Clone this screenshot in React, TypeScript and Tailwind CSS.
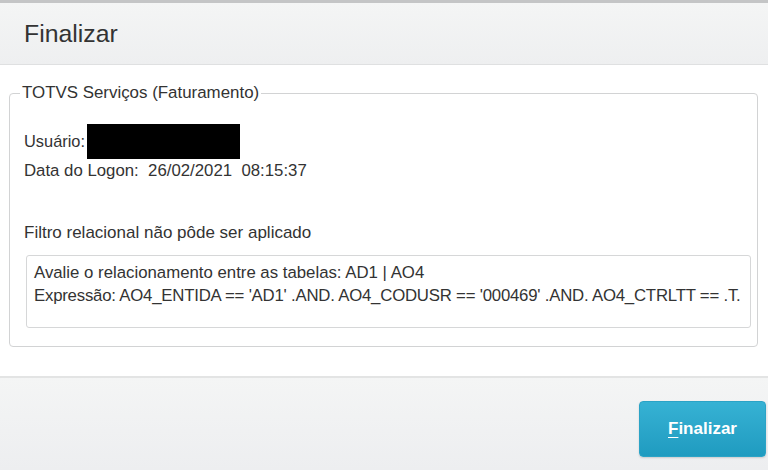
import React from "react";

export default function App() {
  return (
    <div className="w-[768px] h-[470px] bg-white flex flex-col font-['Liberation_Sans',Arial,sans-serif] text-[#333] overflow-hidden">
      <div className="h-[65px] shrink-0 border-t-[3px] border-b border-t-[#c4c5c6] border-b-[#dfe0e1] bg-gradient-to-b from-[#f4f5f5] to-[#eeeff0] flex items-center pl-[24px]">
        <span className="text-[24.8px] leading-[28px] text-[#333]">Finalizar</span>
      </div>
      <div className="flex-1 bg-white">
        <fieldset className="mt-[19px] ml-[9px] mr-[10px] border border-[#d2d3d4] rounded-[4px] pl-[14px] pr-[6px] pb-[18px]">
          <legend className="ml-[-4px] px-[2px] text-[16.9px] leading-[18px] text-[#333]">TOTVS Serviços (Faturamento)</legend>
          <div className="mt-[22px] h-[35px] flex items-center text-[16.4px]">
            <span>Usuário:</span>
            <div className="ml-[2px] w-[153px] h-[35px] bg-black" />
          </div>
          <div className="mt-[1px] h-[22px] flex items-center text-[16.8px] whitespace-pre">Data do Logon:  26/02/2021  08:15:37</div>
          <div className="mt-[40px] h-[22px] flex items-center text-[17px]">Filtro relacional não pôde ser aplicado</div>
          <div className="mt-[11px] ml-[2px] h-[73px] border border-[#d6d7d8] rounded-[3px] pl-[7px] pt-[5px] text-[16.8px] leading-[23px]">
            <div>Avalie o relacionamento entre as tabelas: AD1 | AO4</div>
            <div className="tracking-[-0.22px]">Expressão: AO4_ENTIDA == 'AD1' .AND. AO4_CODUSR == '000469' .AND. AO4_CTRLTT == .T.</div>
          </div>
        </fieldset>
      </div>
      <div className="h-[94px] shrink-0 border-t-2 border-[#e3e4e4] bg-gradient-to-b from-[#f4f5f5] to-[#edeef0] flex justify-end pr-[2px] pt-[23px]">
        <button className="w-[127px] h-[56px] rounded-[4px] bg-gradient-to-b from-[#36b2d4] to-[#1f9bc0] border border-[#2ba3c6] text-white font-bold text-[17px] shadow-[0_1px_2px_rgba(0,0,0,0.15)]">
          <span className="underline underline-offset-[3px]">F</span>inalizar
        </button>
      </div>
    </div>
  );
}
